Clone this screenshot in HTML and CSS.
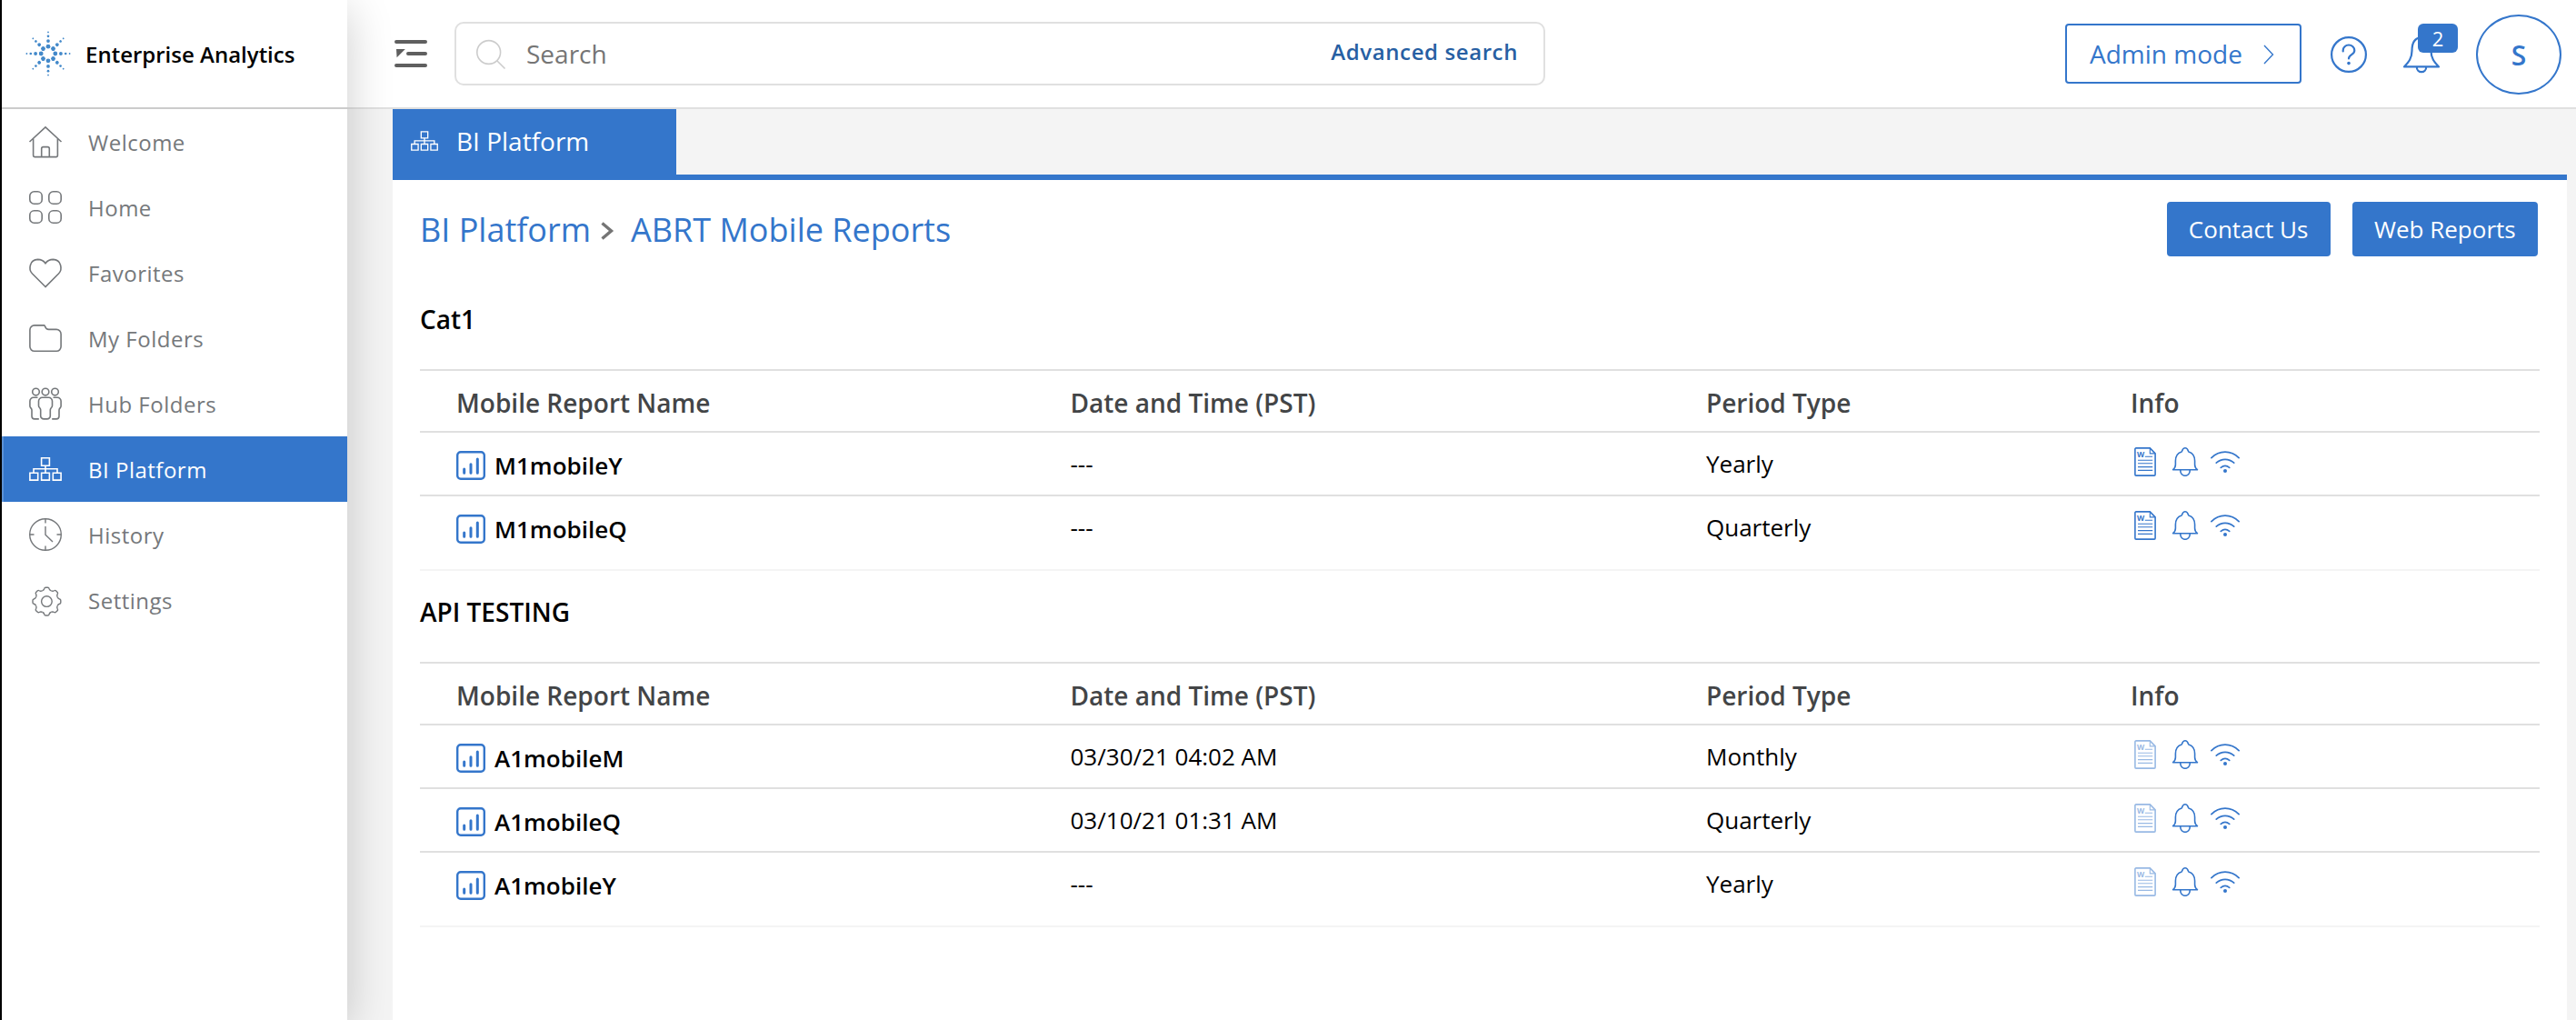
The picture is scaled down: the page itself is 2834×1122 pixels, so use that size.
FILE: index.html
```
<!DOCTYPE html>
<html lang="en">
<head>
<meta charset="utf-8">
<title>Enterprise Analytics</title>
<link rel="stylesheet" href="styles.css">
</head>
<body>
<svg class="sprite" aria-hidden="true">
  <symbol id="i-org" viewBox="0 0 36 36"><path d="M13.6 5.8h8.8v8.4h-8.8zM.9 22.2h8.8v7.9H.9zM13.6 22.2h8.8v7.9h-8.8zM26.3 22.2h8.8v7.9h-8.8zM18 14.2v8M5 22.2v-4.4h26v4.4"/></symbol>
  <symbol id="i-chart" viewBox="0 0 32 32"><rect x="1.2" y="1.2" width="29.6" height="29.6" rx="3.6" stroke-width="2.4"/><path d="M8.7 20v4.2M16 14.7v9.5M23.3 9v15.2" stroke-width="3" stroke-linecap="round"/></symbol>
  <symbol id="i-doc" viewBox="0 0 32 32"><path d="M6 .9h15.3l5.800 6V30a1.100 1.100 0 0 1-1.100 1.100H6A1.100 1.100 0 0 1 4.900 30V2A1.100 1.100 0 0 1 6 .9z"/><path d="M21.300 1v5.900H27M15.800 10.300h8.300M8 14.300h16.200M8 17.800h16.200M8 21.600h16.200M8 25.400h16.200" stroke-width="1.1"/><text class="doc-letter" x="7" y="10.600">W</text></symbol>
  <symbol id="i-bell" viewBox="0 0 32 32"><path d="M2.600 24.700c2.200-1.600 2.800-3 2.800-5.700v-4c0-5.600 2.800-8.600 6.600-9.900C13 4.700 12.600.8 16 .8s3 3.900 4 4.300c3.800 1.300 6.600 4.300 6.600 9.900v4c0 2.700.6 4.100 2.800 5.700zM10.800 24.700v1.400a5.200 5.200 0 0 0 10.400 0v-1.400" stroke-linejoin="round"/></symbol>
  <symbol id="i-wifi" viewBox="0 0 32 32"><path d="M.9 11.600C9.500 2.900 22.500 2.900 31.100 11.600M6.300 17.200c5.600-5.200 13.800-5.200 19.400 0M11.300 22.400c2.800-2.300 6.600-2.300 9.400 0" stroke-width="1.7" stroke-linecap="round"/><circle cx="16" cy="26" r="2" fill="currentColor" stroke="none"/></symbol>
</svg>

<div class="app">
  <aside class="sidebar">
    <div class="brand">
      <svg class="logo" viewBox="-25 -25 50 50">
        <defs><g id="ray"><circle cy="-7.8" r="2.4"/><circle cy="-13.9" r="1.9"/><circle cy="-19.2" r="1.35"/><circle cy="-23.6" r=".9"/></g></defs>
        <use href="#ray"/><use href="#ray" transform="rotate(45)"/><use href="#ray" transform="rotate(90)"/><use href="#ray" transform="rotate(135)"/><use href="#ray" transform="rotate(180)"/><use href="#ray" transform="rotate(225)"/><use href="#ray" transform="rotate(270)"/><use href="#ray" transform="rotate(315)"/>
      </svg>
      <span>Enterprise Analytics</span>
    </div>
    <nav class="nav">
      <a class="nav-item"><svg class="icon" viewBox="0 0 36 36"><path d="M.5 18 18 1.800 35.500 18M4.600 14.600v18.500a1.500 1.500 0 0 0 1.500 1.500h23.800a1.500 1.500 0 0 0 1.500-1.500V14.600M13.700 34.500V25.600a2 2 0 0 1 2-2h4.600a2 2 0 0 1 2 2v8.900"/></svg>Welcome</a>
      <a class="nav-item"><svg class="icon" viewBox="0 0 36 36"><rect x=".8" y=".8" width="13.400" height="13.400" rx="4.800"/><rect x="21.800" y=".8" width="13.400" height="13.400" rx="4.800"/><rect x=".8" y="21.800" width="13.400" height="13.400" rx="4.800"/><rect x="21.800" y="21.800" width="13.400" height="13.400" rx="4.800"/></svg>Home</a>
      <a class="nav-item"><svg class="icon" viewBox="0 0 36 36"><path d="M18 33.500 3.500 19C-1.200 14 .8 3.600 9.500 3.400c4.200 0 6.800 1.800 8.500 4.300 1.700-2.500 4.300-4.300 8.500-4.300 8.700.2 10.700 10.600 6 15.600z"/></svg>Favorites</a>
      <a class="nav-item"><svg class="icon" viewBox="0 0 36 36"><path d="M.9 8.900a5 5 0 0 1 5-5h10.900c.9 0 .7 4.500 4.700 4.500h8.600a5 5 0 0 1 5 5v13.900a5 5 0 0 1-5 5H5.900a5 5 0 0 1-5-5z"/></svg>My Folders</a>
      <a class="nav-item"><svg class="icon" viewBox="0 0 36 36"><circle cx="7.500" cy="5.100" r="3.800"/><circle cx="18" cy="5.100" r="3.800"/><circle cx="28.500" cy="5.100" r="3.800"/><path d="M14.400 11.300h7.200a3.900 3.900 0 0 1 3.900 3.900v5c0 2.300-2.100 2.400-2.200 4.700v6.500a3.500 3.500 0 0 1-3.500 3.500h-3.600a3.500 3.500 0 0 1-3.500-3.500v-6.500c-.1-2.300-2.200-2.400-2.200-4.700v-5a3.900 3.900 0 0 1 3.900-3.900zM9.500 11.300H4.800a3.900 3.900 0 0 0-3.900 3.900v5.500c0 2 2 2.300 2.100 4.300v7a3 3 0 0 0 3 2.900h4.800M26.500 11.300h4.700a3.900 3.900 0 0 1 3.900 3.900v5.500c0 2-2 2.300-2.100 4.300v7a3 3 0 0 1-3 2.900h-4.800"/></svg>Hub Folders</a>
      <a class="nav-item active"><svg class="icon"><use href="#i-org"/></svg>BI Platform</a>
      <a class="nav-item"><svg class="icon thin" viewBox="0 0 36 36"><circle cx="18" cy="18" r="17.300"/><path d="M18 1v4.500M18 30.500V35M1 18h4.500M30.500 18H35M18 9v9.200l8 7.800"/></svg>History</a>
      <a class="nav-item"><svg class="icon thin" viewBox="0 0 36 36"><defs><path id="tooth" d="M-4.900-11.800C-3.900-12.200-3-12.300-2.600-14.200Q-2.400-15.400-1.200-15.400H1.200Q2.400-15.400 2.600-14.200C3-12.300 3.900-12.200 4.900-11.800"/></defs><g transform="translate(19.400 19.600)"><circle r="5.800"/><use href="#tooth"/><use href="#tooth" transform="rotate(45)"/><use href="#tooth" transform="rotate(90)"/><use href="#tooth" transform="rotate(135)"/><use href="#tooth" transform="rotate(180)"/><use href="#tooth" transform="rotate(225)"/><use href="#tooth" transform="rotate(270)"/><use href="#tooth" transform="rotate(315)"/></g></svg>Settings</a>
    </nav>
  </aside>

  <div class="main">
    <header class="topbar">
      <svg class="menu-toggle" viewBox="0 0 36 32"><path d="M2 3h32M15 16h19M2 29h32"/><path class="solid" d="M2 11h9.800L2.600 20.200z"/></svg>
      <div class="search">
        <svg class="search-icon" viewBox="0 0 32 32"><circle cx="13.700" cy="14.500" r="12.900"/><path d="M23 24l8.500 8.500"/></svg>
        <span class="placeholder">Search</span>
        <a class="advanced">Advanced search</a>
      </div>
      <div class="tools">
        <a class="admin">Admin mode<svg class="chevron" viewBox="0 0 12 22"><path d="M1 1l9.500 10L1 21"/></svg></a>
        <svg class="tool-icon" viewBox="0 0 40 40"><circle cx="20" cy="20" r="18.900"/><path d="M13.700 16.500v-1a6.300 6 0 0 1 12.600 0c0 5-6.300 4.300-6.300 9" stroke-linecap="round"/><circle class="dot" cx="20" cy="29.600" r="1.800"/></svg>
        <div class="alerts">
          <svg class="tool-icon" viewBox="0 0 40 40"><path d="M1 33.400C6 28 9.500 24 9.500 16 9.500 7 13 1.300 20 1.300S30.500 7 30.500 16c0 8 3.500 12 8.500 17.400zM14.800 34a5.200 5.200 0 0 0 10.400 0" stroke-linejoin="round"/></svg>
          <span class="badge">2</span>
        </div>
        <div class="avatar">S</div>
      </div>
    </header>

    <div class="tabs">
      <a class="tab"><svg class="tab-icon"><use href="#i-org"/></svg>BI Platform</a>
    </div>

    <main class="panel">
      <div class="panel-head">
        <div class="crumbs"><a>BI Platform</a><svg class="crumb-sep" viewBox="0 0 14 20"><path d="M1.500 1.500 11.500 10l-10 8.500"/></svg><a>ABRT Mobile Reports</a></div>
        <div class="actions"><a class="btn">Contact Us</a><a class="btn">Web Reports</a></div>
      </div>

      <section class="group">
        <h2>Cat1</h2>
        <div class="table">
          <div class="row head"><span>Mobile Report Name</span><span>Date and Time (PST)</span><span>Period Type</span><span>Info</span></div>
          <div class="row"><span class="name"><svg><use href="#i-chart"/></svg>M1mobileY</span><span>---</span><span>Yearly</span><span class="info"><svg><use href="#i-doc"/></svg><svg><use href="#i-bell"/></svg><svg><use href="#i-wifi"/></svg></span></div>
          <div class="row"><span class="name"><svg><use href="#i-chart"/></svg>M1mobileQ</span><span>---</span><span>Quarterly</span><span class="info"><svg><use href="#i-doc"/></svg><svg><use href="#i-bell"/></svg><svg><use href="#i-wifi"/></svg></span></div>
        </div>
      </section>

      <section class="group">
        <h2>API TESTING</h2>
        <div class="table">
          <div class="row head"><span>Mobile Report Name</span><span>Date and Time (PST)</span><span>Period Type</span><span>Info</span></div>
          <div class="row"><span class="name"><svg><use href="#i-chart"/></svg>A1mobileM</span><span>03/30/21 04:02 AM</span><span>Monthly</span><span class="info"><svg class="off"><use href="#i-doc"/></svg><svg><use href="#i-bell"/></svg><svg><use href="#i-wifi"/></svg></span></div>
          <div class="row"><span class="name"><svg><use href="#i-chart"/></svg>A1mobileQ</span><span>03/10/21 01:31 AM</span><span>Quarterly</span><span class="info"><svg class="off"><use href="#i-doc"/></svg><svg><use href="#i-bell"/></svg><svg><use href="#i-wifi"/></svg></span></div>
          <div class="row"><span class="name"><svg><use href="#i-chart"/></svg>A1mobileY</span><span>---</span><span>Yearly</span><span class="info"><svg class="off"><use href="#i-doc"/></svg><svg><use href="#i-bell"/></svg><svg><use href="#i-wifi"/></svg></span></div>
        </div>
      </section>
    </main>
  </div>
</div>
</body>
</html>
```
FILE: styles.css
```
:root {
  --blue: #3476cb;
  --line: #e0e0e0;
  --grey: #75787b;
}

* { box-sizing: border-box; }

body {
  margin: 0;
  font-family: "Open Sans", sans-serif;
  color: #000;
  background: #f4f4f4;
}

.sprite { display: none; }

svg {
  flex: none;
  fill: none;
  stroke: currentColor;
  stroke-width: 1.6;
  overflow: visible;
}

.app {
  display: flex;
  height: 1122px;
  border-left: 2px solid #000;
  overflow: hidden;
}

/* Sidebar */
.sidebar {
  position: relative;
  z-index: 1;
  flex: none;
  width: 380px;
  background: #fff;
  box-shadow: 0 10px 48px rgba(0, 0, 0, .2);
}

.brand {
  display: flex;
  align-items: center;
  height: 120px;
  padding-left: 26px;
  border-bottom: 2px solid #ccc;
  font-size: 24px;
  font-weight: 600;
}

.logo {
  width: 50px;
  height: 50px;
  margin-right: 16px;
  fill: #4389ca;
  stroke: none;
}

.nav-item {
  display: flex;
  align-items: center;
  gap: 29px;
  height: 72px;
  padding-left: 30px;
  font-size: 24px;
  letter-spacing: .5px;
  color: var(--grey);
}

.nav-item.active {
  padding-left: 28px;
  border-left: 2px solid #5c92d6;
  background: var(--blue);
  color: #fff;
}

.icon {
  width: 36px;
  height: 36px;
}

.thin { stroke-width: 1.4; }

/* Top bar */
.main {
  flex: 1;
  display: flex;
  flex-direction: column;
}

.topbar {
  display: flex;
  align-items: center;
  flex: none;
  height: 120px;
  padding: 0 16px 0 52px;
  border-bottom: 2px solid var(--line);
  background: #fff;
}

.menu-toggle {
  width: 36px;
  height: 32px;
  margin-right: 30px;
  color: #5f5f5f;
  stroke-width: 4;
  stroke-linecap: round;
}

.solid {
  fill: currentColor;
  stroke: none;
}

.search {
  display: flex;
  align-items: center;
  width: 1200px;
  height: 70px;
  padding: 0 28px 0 22px;
  border: 2px solid var(--line);
  border-radius: 10px;
}

.search-icon {
  width: 32px;
  height: 32px;
  margin-right: 23px;
  color: #ccc;
}

.placeholder {
  font-size: 28px;
  color: #757575;
}

.advanced {
  margin-left: auto;
  padding-bottom: 5px;
  font-size: 24px;
  font-weight: 600;
  letter-spacing: .6px;
  color: #275fa3;
}

.tools {
  display: flex;
  align-items: center;
  gap: 40px;
  height: 88px;
  margin: 2px 0 0 auto;
  color: var(--blue);
}

.admin {
  display: flex;
  align-items: center;
  justify-content: space-between;
  width: 260px;
  height: 66px;
  margin: -2px -8px 0 0;
  padding: 0 28px 0 25px;
  border: 2px solid var(--blue);
  border-radius: 4px;
  font-size: 28px;
}

.chevron {
  width: 12px;
  height: 22px;
  margin-top: 2px;
  stroke-width: 1.4;
}

.tool-icon {
  display: block;
  width: 40px;
  height: 40px;
  stroke-width: 2.2;
}

.dot {
  fill: currentColor;
  stroke: none;
}

.alerts { position: relative; }

.badge {
  position: absolute;
  left: 16px;
  top: -14px;
  width: 44px;
  height: 32px;
  border-radius: 6px;
  background: var(--blue);
  color: #fff;
  font-size: 22px;
  line-height: 32px;
  text-align: center;
}

.avatar {
  width: 94px;
  height: 88px;
  border: 2px solid var(--blue);
  border-radius: 50%;
  font-size: 30px;
  font-weight: 600;
  line-height: 85px;
  text-align: center;
}

/* Tabs */
.tabs {
  flex: none;
  height: 78px;
  margin: 0 10px 0 50px;
  border-bottom: 6px solid var(--blue);
}

.tab {
  display: flex;
  align-items: center;
  width: 312px;
  height: 72px;
  padding: 0 0 2px 20px;
  background: var(--blue);
  color: #fff;
  font-size: 28px;
}

.tab-icon {
  width: 30px;
  height: 30px;
  margin-right: 20px;
}

/* Content */
.panel {
  flex: 1;
  margin: 0 10px 0 50px;
  padding: 24px 30px 0;
  background: #fff;
}

.panel-head {
  display: flex;
  align-items: center;
  justify-content: space-between;
  height: 60px;
  margin-bottom: 50px;
}

.crumbs {
  display: flex;
  align-items: center;
  font-size: 36px;
  color: var(--blue);
}

.crumb-sep {
  width: 14px;
  height: 20px;
  margin: 4px 19px 0 11px;
  color: #757575;
  stroke-width: 3.4;
}

.actions {
  display: flex;
  gap: 24px;
  padding-right: 2px;
}

.btn {
  height: 60px;
  padding: 0 24.3px;
  border-radius: 4px;
  background: var(--blue);
  color: #fff;
  font-size: 26px;
  line-height: 60px;
}

.group { margin-bottom: 26px; }

h2 {
  margin: 0 0 36px;
  font-size: 28px;
  font-weight: 600;
  line-height: 38px;
}

.row {
  display: grid;
  grid-template-columns: 675.5px 699.5px 467px 1fr;
  align-items: center;
  height: 70px;
  padding-left: 40px;
  border-bottom: 2px solid var(--line);
  font-size: 26px;
}

.row.head {
  padding-top: 4px;
  border-top: 2px solid var(--line);
  color: #434547;
  font-size: 28px;
  font-weight: 600;
}

.row:last-child {
  height: 82px;
  padding-bottom: 12px;
  border-bottom-color: #f4f4f4;
}

.row svg {
  width: 32px;
  height: 32px;
  color: var(--blue);
}

.name {
  display: flex;
  align-items: center;
  gap: 10px;
  padding-top: 4px;
  font-weight: 600;
}

.info {
  display: flex;
  gap: 12px;
  padding-bottom: 4px;
}

.row svg.off { opacity: .5; }

.doc-letter {
  fill: currentColor;
  stroke: none;
  font: 700 8.5px "Open Sans", sans-serif;
}
```
